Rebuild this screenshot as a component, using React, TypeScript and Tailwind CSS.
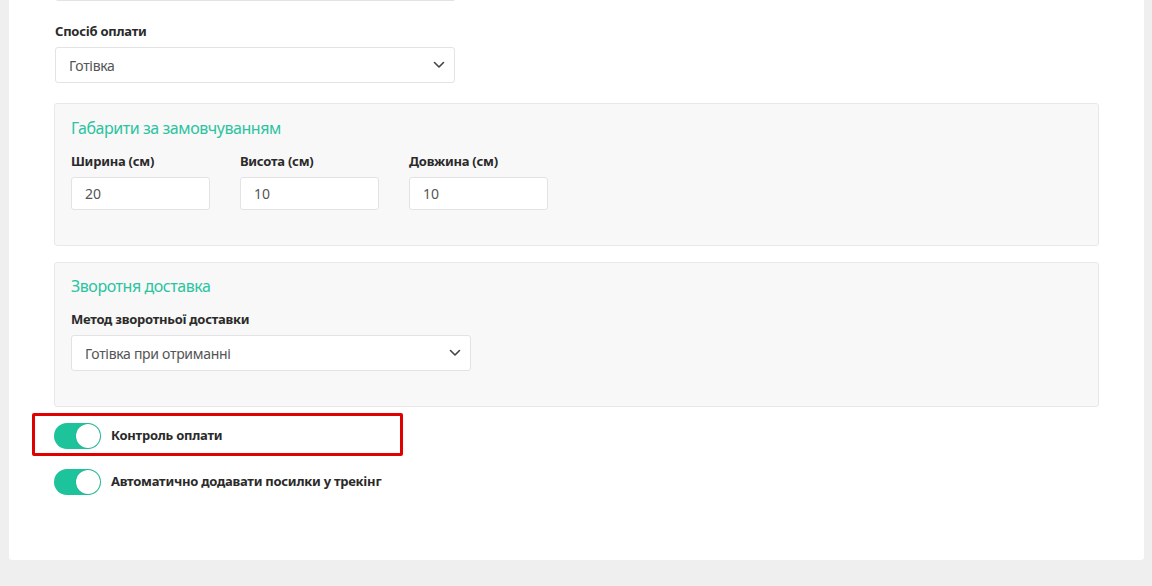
import React from "react";

const Chevron = () => (
  <svg width="12" height="8" viewBox="0 0 12 8" fill="none" className="shrink-0">
    <path d="M1.5 1.5L6 6L10.5 1.5" stroke="#444" strokeWidth="1.6" strokeLinecap="round" strokeLinejoin="round" />
  </svg>
);

const Select = ({ value, w }: { value: string; w: string }) => (
  <div className={`${w} h-[36px] bg-white border border-[#e3e3e3] rounded-[3px] flex items-center justify-between pl-[13px] pr-[9px]`}>
    <span className="text-[14px] text-[#555] tracking-[-0.3px]">{value}</span>
    <Chevron />
  </div>
);

const Toggle = () => (
  <div className="w-[47px] h-[26px] rounded-full bg-[#1dc39a] relative shrink-0">
    <div className="absolute right-[1px] top-[1px] w-[24px] h-[24px] rounded-full bg-white shadow-[0_0_1px_rgba(0,0,0,0.3)]" />
  </div>
);

const Field = ({ label, value }: { label: string; value: string }) => (
  <div className="flex flex-col w-[139px]">
    <div className="text-[13px] font-bold text-[#2a2a2a] leading-[18px] tracking-[-0.25px]">{label}</div>
    <div className="mt-[7px] h-[33px] bg-white border border-[#e3e3e3] rounded-[3px] flex items-center pl-[13px] text-[14px] text-[#555]">
      {value}
    </div>
  </div>
);

export default function App() {
  return (
    <div
      className="w-[1152px] h-[586px] bg-[#efefef] overflow-hidden pl-[9px] pr-[8px]"
      style={{ fontFamily: '"Noto Sans", "Open Sans", sans-serif' }}
    >
      <div className="bg-white rounded-b-[3px] pl-[45px] pr-[45px] pb-[65px] -mt-[35px]">
        <div className="w-[401px] h-[36px] border border-[#e3e3e3] rounded-[3px] ml-[1px]" />
        <div className="mt-[21px] ml-[1px] text-[13px] font-bold text-[#2a2a2a] leading-[18px] tracking-[-0.25px]">Спосіб оплати</div>
        <div className="mt-[7px] ml-[1px]">
          <Select value="Готівка" w="w-[400px]" />
        </div>

        <div className="mt-[20px] bg-[#f8f8f8] border border-[#e8e8e8] rounded-[3px] pt-[13px] pb-[35px] px-[16px]">
          <div className="text-[16px] text-[#2bc3a0] leading-[22px] tracking-[-0.45px]">Габарити за замовчуванням</div>
          <div className="mt-[13px] flex gap-[30px]">
            <Field label="Ширина (см)" value="20" />
            <Field label="Висота (см)" value="10" />
            <Field label="Довжина (см)" value="10" />
          </div>
        </div>

        <div className="mt-[16px] bg-[#f8f8f8] border border-[#e8e8e8] rounded-[3px] pt-[12px] pb-[35px] px-[16px]">
          <div className="text-[16px] text-[#2bc3a0] leading-[22px] tracking-[-0.45px]">Зворотня доставка</div>
          <div className="mt-[13px] text-[13px] font-bold text-[#2a2a2a] leading-[18px] tracking-[-0.25px]">Метод зворотньої доставки</div>
          <div className="mt-[7px]">
            <Select value="Готівка при отриманні" w="w-[400px]" />
          </div>
        </div>

        <div className="mt-[16px] relative flex items-center gap-[10px] h-[26px]">
          <Toggle />
          <span className="text-[13px] font-bold text-[#2a2a2a] tracking-[-0.25px]">Контроль оплати</span>
          <div className="absolute -left-[22px] -top-[10px] w-[371px] h-[43px] border-[3px] border-[#e00000] rounded-[2px] pointer-events-none" />
        </div>

        <div className="mt-[20px] flex items-center gap-[10px] h-[26px]">
          <Toggle />
          <span className="text-[13px] font-bold text-[#2a2a2a] tracking-[-0.25px]">Автоматично додавати посилки у трекінг</span>
        </div>
      </div>
    </div>
  );
}
